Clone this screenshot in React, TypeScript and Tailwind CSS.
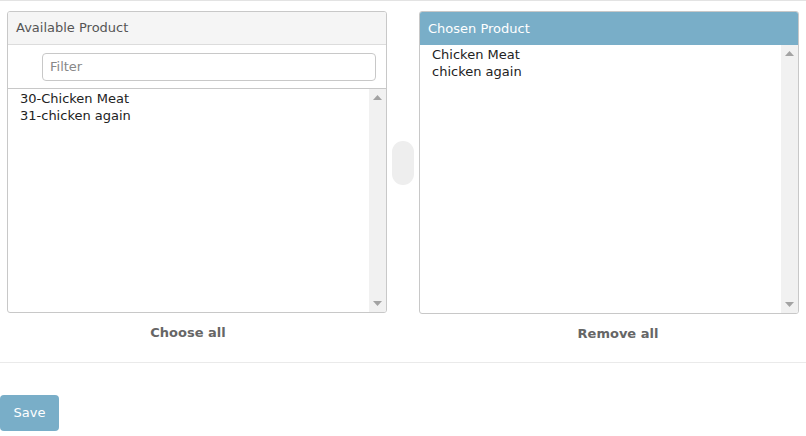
import React from "react";

const font = { fontFamily: '"DejaVu Sans", Verdana, sans-serif' };

function FakeScrollbar() {
  return (
    <div className="w-[17px] shrink-0 bg-[#f1f1f1] flex flex-col justify-between items-center py-[6px]">
      <svg width="9" height="5" viewBox="0 0 9 5"><polygon points="4.5,0 9,5 0,5" fill="#a3a3a3" /></svg>
      <svg width="9" height="5" viewBox="0 0 9 5"><polygon points="0,0 9,0 4.5,5" fill="#a3a3a3" /></svg>
    </div>
  );
}

export default function App() {
  return (
    <div className="w-[806px] h-[436px] bg-white text-[13px] text-[#333] overflow-hidden" style={font}>
      <div className="border-t border-[#e3e3e3] pt-[10px] px-[7px]">
        <div className="flex items-start">
          <div className="w-[380px] flex flex-col items-center">
            <div className="w-[380px] h-[302px] border border-[#c8c8c8] rounded-[3px] flex flex-col overflow-hidden">
              <div className="h-[33px] bg-[#f5f5f5] border-b border-[#dcdcdc] flex items-center px-[8px] text-[#555] shrink-0">
                Available Product
              </div>
              <div className="h-[44px] flex items-center justify-end pr-[10px] border-b border-[#c8c8c8] shrink-0">
                <div className="w-[334px] h-[28px] border border-[#c8c8c8] rounded-[4px] flex items-center px-[7px] pt-[1px] text-[#888]">
                  Filter
                </div>
              </div>
              <div className="flex flex-1">
                <div className="flex-1 pl-[12px] pt-[1px] leading-[17px] text-[#222]">
                  <div>30-Chicken Meat</div>
                  <div>31-chicken again</div>
                </div>
                <FakeScrollbar />
              </div>
            </div>
            <div className="mt-[11px] pr-[18px] font-bold text-[#666] leading-[17px]">Choose all</div>
          </div>
          <div className="w-[32px] flex justify-center pt-[130px]">
            <div className="w-[22px] h-[44px] rounded-[11px] bg-[#eeeeee]" />
          </div>
          <div className="w-[380px] flex flex-col items-center">
            <div className="w-[380px] h-[303px] border border-[#c8c8c8] rounded-[3px] flex flex-col overflow-hidden">
              <div className="h-[33px] bg-[#79aec8] flex items-center px-[8px] text-white shrink-0">
                Chosen Product
              </div>
              <div className="flex flex-1">
                <div className="flex-1 pl-[12px] pt-[1px] leading-[17px] text-[#222]">
                  <div>Chicken Meat</div>
                  <div>chicken again</div>
                </div>
                <FakeScrollbar />
              </div>
            </div>
            <div className="mt-[11px] pl-[18px] font-bold text-[#666] leading-[17px]">Remove all</div>
          </div>
        </div>
      </div>
      <div className="mt-[20px] border-t border-[#eaeaea]" />
      <div className="mt-[32px]">
        <button className="w-[59px] h-[36px] bg-[#79aec8] rounded-[4px] text-white text-[13px]" style={font}>
          Save
        </button>
      </div>
    </div>
  );
}
